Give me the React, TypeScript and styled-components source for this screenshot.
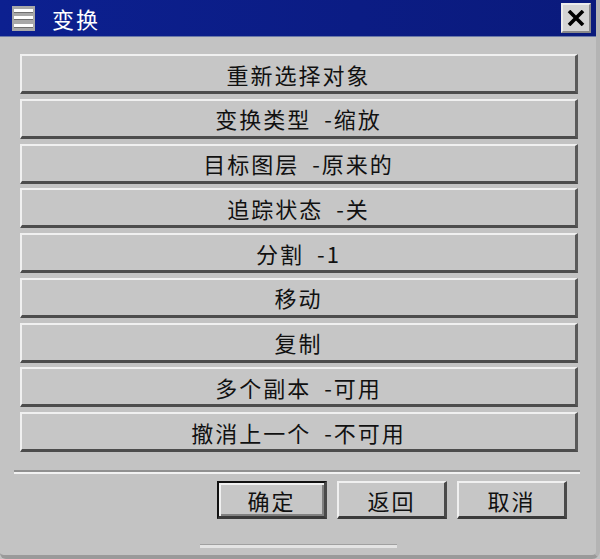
import React from "react";
import styled, { createGlobalStyle } from "styled-components";

const Global = createGlobalStyle`
  html, body { margin: 0; padding: 0; background: #c3c3c3; }
  body { font-family: "Noto Sans CJK SC", "DejaVu Sans", sans-serif; }
`;

const Window = styled.div`
  width: 600px;
  height: 559px;
  box-sizing: border-box;
  background: #c3c3c3;
  display: flex;
  flex-direction: column;
  border-right: 4px solid #b4b4b4;
  border-bottom: 4px solid #9a9a9a;
  border-bottom-right-radius: 8px;
  border-bottom-left-radius: 6px;
  overflow: hidden;
`;

const TitleBar = styled.div`
  height: 37px;
  flex: none;
  background: linear-gradient(90deg, #0c2090 0%, #0b1c84 60%, #0a1a7c 100%);
  display: flex;
  align-items: center;
  padding: 0 5px 0 12px;
  box-sizing: border-box;
  border-bottom: 1px solid #6b7aa8;
`;

const SysIcon = styled.div`
  width: 23px;
  height: 25px;
  background: #a8a8a8;
  display: flex;
  flex-direction: column;
  justify-content: space-between;
  padding: 3px 2px;
  box-sizing: border-box;
  & > span {
    display: block;
    height: 3px;
    background: #ffffff;
    border-bottom: 1px solid #707070;
  }
`;

const Title = styled.div`
  color: #ffffff;
  font-size: 22px;
  letter-spacing: 2px;
  margin-left: 17px;
  flex: 1;
  line-height: 1;
`;

const CloseBtn = styled.div`
  width: 30px;
  height: 30px;
  background: #d4d4d4;
  box-sizing: border-box;
  border-top: 2px solid #ececec;
  border-left: 2px solid #ececec;
  border-bottom: 2px solid #8a8a8a;
  border-right: 2px solid #8a8a8a;
  display: flex;
  align-items: center;
  justify-content: center;
`;

const Body = styled.div`
  flex: 1;
  display: flex;
  flex-direction: column;
  padding: 17px 18px 0 20px;
`;

const List = styled.div`
  display: flex;
  flex-direction: column;
  gap: 4.75px;
`;

const RowButton = styled.div`
  height: 40px;
  box-sizing: border-box;
  background: #c6c6c6;
  border-top: 2px solid #f0f0f0;
  border-left: 2px solid #f0f0f0;
  border-bottom: 3px solid #4c4c4c;
  border-right: 3px solid #5a5a5a;
  display: flex;
  align-items: center;
  justify-content: center;
  font-size: 22px;
  letter-spacing: 2px;
  color: #111;
  line-height: 1;
  white-space: pre;
`;

const Separator = styled.div`
  margin: 18px 0 0 -6px;
  height: 0;
  border-top: 2px solid #909090;
  border-bottom: 2px solid #f2f2f2;
  margin-right: -2px;
`;

const Footer = styled.div`
  display: flex;
  justify-content: flex-end;
  gap: 10px;
  margin-top: 7px;
  padding-right: 11px;
`;

const FootButton = styled.div<{ $default?: boolean }>`
  width: 110px;
  height: 38px;
  box-sizing: border-box;
  background: #c6c6c6;
  border-top: 2px solid ${(p) => (p.$default ? "#111" : "#f0f0f0")};
  border-left: 2px solid ${(p) => (p.$default ? "#111" : "#f0f0f0")};
  border-bottom: 3px solid #3a3a3a;
  border-right: 3px solid #4a4a4a;
  box-shadow: ${(p) => (p.$default ? "inset 2px 2px 0 #f0f0f0, inset -2px -2px 0 #808080" : "none")};
  display: flex;
  align-items: center;
  justify-content: center;
  font-size: 22px;
  letter-spacing: 2px;
  color: #111;
  line-height: 1;
`;

const BottomRidge = styled.div`
  margin: auto 0 0 180px;
  width: 197px;
  height: 3px;
  background: #e4e4e4;
  border-top: 1px solid #a0a0a0;
  margin-bottom: 7px;
`;

const rows = [
  "重新选择对象",
  "变换类型\u2002-缩放",
  "目标图层\u2002-原来的",
  "追踪状态\u2002-关",
  "分割\u2002-1",
  "移动",
  "复制",
  "多个副本\u2002-可用",
  "撤消上一个\u2002-不可用",
];

export default function App() {
  return (
    <>
      <Global />
      <Window>
        <TitleBar>
          <SysIcon>
            <span />
            <span />
            <span />
          </SysIcon>
          <Title>变换</Title>
          <CloseBtn>
            <svg width="18" height="16" viewBox="0 0 18 16">
              <path d="M2 1 L16 15 M16 1 L2 15" stroke="#000" strokeWidth="3.6" />
            </svg>
          </CloseBtn>
        </TitleBar>
        <Body>
          <List>
            {rows.map((r) => (
              <RowButton key={r}>{r}</RowButton>
            ))}
          </List>
          <Separator />
          <Footer>
            <FootButton $default>确定</FootButton>
            <FootButton>返回</FootButton>
            <FootButton>取消</FootButton>
          </Footer>
          <BottomRidge />
        </Body>
      </Window>
    </>
  );
}
